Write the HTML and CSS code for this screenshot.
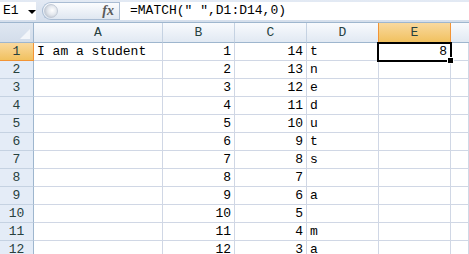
FILE: index.html
```html
<!DOCTYPE html>
<html>
<head>
<meta charset="utf-8">
<link rel="stylesheet" href="styles.css">
</head>
<body>
<div class="fbar">
  <div class="namebox"><span class="ref">E1</span><span class="drop"></span></div>
  <div class="spacer"></div>
  <div class="pill"><span class="knob"></span><span class="fx">fx</span></div>
  <div class="formula">=MATCH(" ",D1:D14,0)</div>
</div>
<div class="sheet">
  <div class="corner"><span class="tri"></span></div>
  <div class="ch">A</div><div class="ch">B</div><div class="ch">C</div><div class="ch">D</div><div class="ch sel">E</div><div class="ch last"></div>

  <div class="rh sel">1</div><div class="c">I am a student</div><div class="c n">1</div><div class="c n">14</div><div class="c">t</div><div class="c n active">8<span class="handle"></span></div><div class="c"></div>
  <div class="rh">2</div><div class="c"></div><div class="c n">2</div><div class="c n">13</div><div class="c">n</div><div class="c"></div><div class="c"></div>
  <div class="rh">3</div><div class="c"></div><div class="c n">3</div><div class="c n">12</div><div class="c">e</div><div class="c"></div><div class="c"></div>
  <div class="rh">4</div><div class="c"></div><div class="c n">4</div><div class="c n">11</div><div class="c">d</div><div class="c"></div><div class="c"></div>
  <div class="rh">5</div><div class="c"></div><div class="c n">5</div><div class="c n">10</div><div class="c">u</div><div class="c"></div><div class="c"></div>
  <div class="rh">6</div><div class="c"></div><div class="c n">6</div><div class="c n">9</div><div class="c">t</div><div class="c"></div><div class="c"></div>
  <div class="rh">7</div><div class="c"></div><div class="c n">7</div><div class="c n">8</div><div class="c">s</div><div class="c"></div><div class="c"></div>
  <div class="rh">8</div><div class="c"></div><div class="c n">8</div><div class="c n">7</div><div class="c"></div><div class="c"></div><div class="c"></div>
  <div class="rh">9</div><div class="c"></div><div class="c n">9</div><div class="c n">6</div><div class="c">a</div><div class="c"></div><div class="c"></div>
  <div class="rh">10</div><div class="c"></div><div class="c n">10</div><div class="c n">5</div><div class="c"></div><div class="c"></div><div class="c"></div>
  <div class="rh">11</div><div class="c"></div><div class="c n">11</div><div class="c n">4</div><div class="c">m</div><div class="c"></div><div class="c"></div>
  <div class="rh">12</div><div class="c"></div><div class="c n">12</div><div class="c n">3</div><div class="c">a</div><div class="c"></div><div class="c"></div>
</div>
</body>
</html>
```
FILE: styles.css
```css
html, body {
  margin: 0;
  padding: 0;
  background: #ffffff;
  overflow: hidden;
}
body {
  width: 469px;
  height: 254px;
  font-family: "Liberation Mono", "DejaVu Sans Mono", monospace;
  font-size: 13px;
  color: #000;
}
.fbar {
  display: flex;
  height: 18px;
  padding: 2px 0;
  background: linear-gradient(#e3eaf4, #d5dfec);
  border-bottom: 1px solid #9eb6ce;
}
.namebox {
  width: 36px;
  background: #fff;
  display: flex;
  align-items: center;
  box-sizing: border-box;
  padding-left: 3px;
}
.ref {
  line-height: 18px;
}
.drop {
  width: 0;
  height: 0;
  border-left: 4px solid transparent;
  border-right: 4px solid transparent;
  border-top: 4px solid #000;
  margin-left: 9px;
  margin-top: 1px;
}
.spacer {
  width: 6px;
}
.pill {
  width: 77px;
  box-sizing: border-box;
  border: 1px solid #a9bcd3;
  border-right: none;
  border-radius: 9px 0 0 9px;
  background: linear-gradient(#fbfcfe, #dfe7f1);
  display: flex;
  align-items: center;
  padding-left: 1px;
}
.knob {
  width: 14px;
  height: 14px;
  border-radius: 50%;
  background: radial-gradient(circle at 60% 45%, #ffffff 0, #e4e8ee 45%, #b0b7c2 100%);
  border: 1px solid #c2cad6;
  box-sizing: border-box;
}
.fx {
  margin-left: auto;
  margin-right: 5px;
  font-family: "Liberation Serif", serif;
  font-style: italic;
  font-weight: bold;
  font-size: 14px;
  color: #5a5a5a;
}
.formula {
  flex: 1;
  background: #fff;
  border-left: 1px solid #a9bcd3;
  padding-left: 10px;
  line-height: 18px;
}
.sheet {
  display: grid;
  grid-template-columns: 34px 129px 72px 72px 72px 72px 1fr;
  grid-template-rows: 20px;
  grid-auto-rows: 18px;
}
.sheet > div {
  box-sizing: border-box;
  border-right: 1px solid #d0d7e5;
  border-bottom: 1px solid #d0d7e5;
  line-height: 17px;
  white-space: nowrap;
}
.sheet > .corner {
  background: linear-gradient(#dfe7f2, #d3ddea);
  border-right: 1px solid #9eb6ce;
  border-bottom: 1px solid #9eb6ce;
  position: relative;
}
.tri {
  position: absolute;
  right: 3px;
  bottom: 3px;
  width: 0;
  height: 0;
  border-left: 10px solid transparent;
  border-bottom: 10px solid #f3f6fa;
}
.sheet > .ch {
  background: linear-gradient(#f8fafd, #e1e9f3);
  border-right: 1px solid #c5d2e2;
  border-bottom: 1px solid #9eb6ce;
  text-align: center;
  line-height: 19px;
  color: #27413e;
}
.sheet > .ch.last {
  border-right: none;
}
.sheet > .ch.sel {
  background: linear-gradient(#f9d99f, #f1c15f);
  border-left: 1px solid #f29436;
  border-right: 1px solid #f29436;
  border-bottom: 1px solid #f29436;
  margin-left: -1px;
}
.sheet > .rh {
  background: #e4ecf7;
  border-right: 1px solid #9eb6ce;
  border-bottom: 1px solid #c5d2e2;
  text-align: center;
  color: #27413e;
}
.sheet > .rh.sel {
  background: linear-gradient(#f9d99f, #f1c15f);
  border-right: 1px solid #f29436;
  border-bottom: 1px solid #f29436;
}
.sheet > .c {
  padding: 0 3px;
}
.sheet > .n {
  text-align: right;
}
.sheet > .active {
  position: relative;
}
.active::before {
  content: "";
  position: absolute;
  left: -2px;
  top: -1px;
  right: -2px;
  bottom: -2px;
  border: 2px solid #000;
}
.handle {
  position: absolute;
  right: -4px;
  bottom: -4px;
  width: 5px;
  height: 5px;
  background: #000;
  border: 1px solid #fff;
  z-index: 2;
}
```
